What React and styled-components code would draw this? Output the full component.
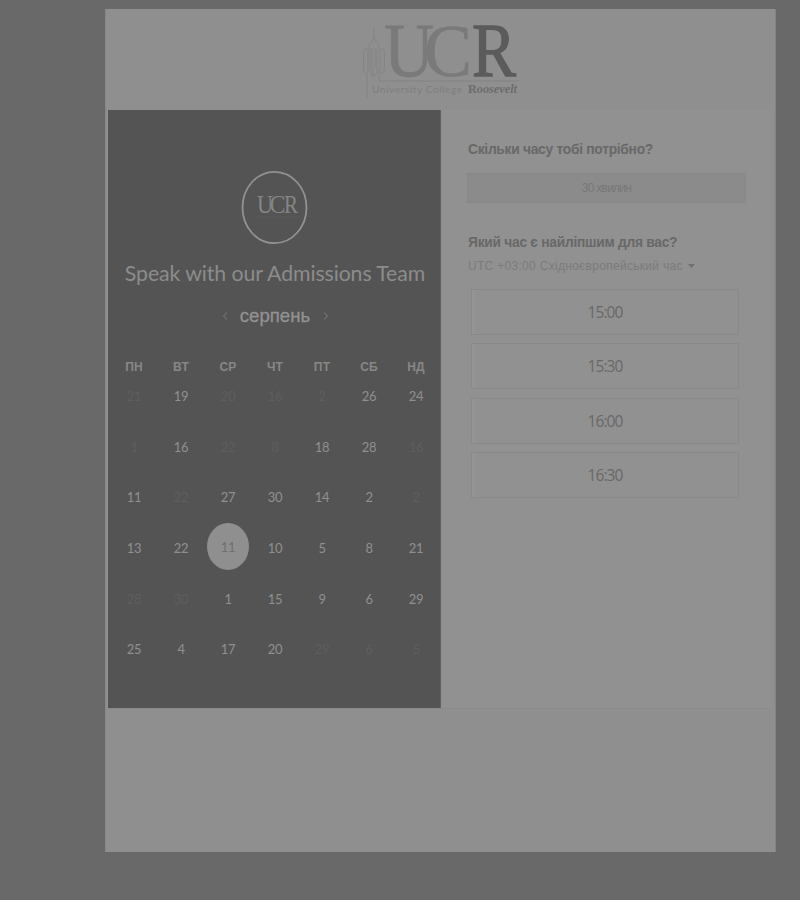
import React from "react";
import styled, { createGlobalStyle } from "styled-components";

const Global = createGlobalStyle`
  * { box-sizing: border-box; }
  html, body { margin: 0; padding: 0; background: #696969; }
  body { font-family: "Liberation Sans", Arial, sans-serif; overflow: hidden; }
`;

const Page = styled.div`
  width: 800px;
  height: 900px;
  padding: 9px 24px 0 105px;
  background: #696969;
`;

const Sheet = styled.main`
  height: 843px;
  background: #8f8f8f;
  border-right: 1px solid #838383;
  border-left: 1px solid #888888;
`;

const Header = styled.header`
  height: 101px;
  padding: 11px 0 0 254px;
`;

const Booking = styled.div`
  display: flex;
  height: 599px;
  width: 663px;
  margin-left: 2px;
  border-bottom: 1px solid #8a8a8a;
`;

const Calendar = styled.section`
  width: 333px;
  height: 598px;
  flex: none;
  background: #545454;
  border-right: 1px solid #606060;
  display: flex;
  flex-direction: column;
  align-items: center;
  padding: 60px 0 0 2px;
`;

const Title = styled.h1`
  margin: 11px 0 0;
  height: 34px;
  font: 400 21.3px/34px Lato, "Open Sans", sans-serif;
  letter-spacing: -0.1px;
  color: #8c8c8c;
  white-space: nowrap;
`;

const MonthBar = styled.div`
  display: flex;
  align-items: center;
  justify-content: center;
  gap: 12px;
  height: 24px;
  margin-top: 14px;
`;

const Month = styled.span`
  width: 71px;
  text-align: center;
  font-size: 18.6px;
  line-height: 24px;
  color: #929292;
  -webkit-text-stroke: 0.3px #929292;
`;

const Arrow = styled.svg`
  width: 6px;
  height: 10px;
  fill: none;
  stroke: #6c6c6c;
  stroke-width: 1.2;
`;

const WeekGrid = styled.div`
  display: grid;
  grid-template-columns: repeat(7, 47px);
  width: 329px;
  margin-top: 30px;
`;

const Weekday = styled.span`
  height: 18px;
  text-align: center;
  font: 700 12px/18px "Liberation Sans", sans-serif;
  letter-spacing: 0.2px;
  color: #878787;
`;

const Days = styled.div`
  display: grid;
  grid-template-columns: repeat(7, 47px);
  grid-auto-rows: 50.6px;
  margin-top: -5px;
  width: 329px;
`;

const Day = styled.span`
  display: flex;
  align-items: center;
  justify-content: center;
  font: 400 13px/16px Lato, sans-serif;
  letter-spacing: -0.3px;
  color: ${(p) => (p.$faint ? "#5e5e5e" : "#909090")};
`;

const Selected = styled.span`
  display: flex;
  align-items: center;
  justify-content: center;
  width: 42px;
  height: 47px;
  margin-bottom: 3px;
  flex: none;
  border-radius: 50%;
  background: #8f8f8f;
  color: #707070;
`;

const Options = styled.section`
  flex: 1;
  background: #919191;
  padding: 29px 0 0 26px;
`;

const Question = styled.h2`
  margin: 0 0 0 1px;
  height: 20px;
  width: max-content;
  font: 700 15px/20px "Liberation Sans", sans-serif;
  letter-spacing: -0.3px;
  transform: scaleX(0.92);
  transform-origin: left;
  color: #686868;
  white-space: nowrap;
`;

const Duration = styled.div`
  width: 279px;
  height: 30px;
  margin: 14px 0 29px;
  display: flex;
  align-items: center;
  justify-content: center;
  border: 1px solid #888888;
  background: #8b8b8b;
  font-size: 12px;
  letter-spacing: -0.75px;
  color: #777777;
`;

const Zone = styled.div`
  display: flex;
  align-items: center;
  gap: 5px;
  height: 16px;
  margin-top: 6px;
  padding-left: 1px;
  font-size: 12px;
  letter-spacing: 0.3px;
  color: #7b7b7b;
  white-space: nowrap;
`;

const Caret = styled.svg`
  width: 7px;
  height: 4px;
  fill: #707070;
`;

const Slots = styled.div`
  display: grid;
  gap: 8.4px;
  width: 268px;
  margin: 15px 0 0 4px;
`;

const Slot = styled.div`
  height: 46px;
  display: flex;
  align-items: center;
  justify-content: center;
  border: 1px solid #898989;
  box-shadow: inset 4px 0 3px -1px #959595;
  font: 400 15.5px/20px "Open Sans", sans-serif;
  letter-spacing: -0.9px;
  color: #686868;
`;

const LogoMark = styled.svg`
  display: block;
  width: 162px;
  height: 80px;
  overflow: visible;
`;

const AvatarMark = styled.svg`
  display: block;
  width: 68px;
  height: 75px;
`;

const weekdays = ["ПН", "ВТ", "СР", "ЧТ", "ПТ", "СБ", "НД"];
const faint = (n) => ({ n, faint: true });
const days = [
  faint(21), 19, faint(20), faint(16), faint(2), 26, 24,
  faint(1), 16, faint(22), faint(8), 18, 28, faint(16),
  11, faint(22), 27, 30, 14, 2, faint(2),
  13, 22, { n: 11, selected: true }, 10, 5, 8, 21,
  faint(28), faint(30), 1, 15, 9, 6, 29,
  25, 4, 17, 20, faint(29), faint(6), faint(5),
].map((d) => (typeof d === "number" ? { n: d } : d));

function Logo() {
  return (
    <LogoMark viewBox="0 0 162 80">
      <g fill="none" stroke="#838383" strokeWidth="1">
        <path d="M14 8v9q-1 4-5 8v5M14 17q1 4 5 8v5" />
        <path d="M4 30q-1 11 0 22l2 2 2-2V30l-2-2zM20 30v22l2 2 2-2q1-11 0-22l-2-2zM10 30v22l3 5v-9M17 30v22l-3 5M10 30l2-2v22M17 30l-2-2v20" />
        <path d="M7 54v24M19 50v11h140" />
      </g>
      <g fontFamily="'Liberation Serif', serif">
        <text x="24" y="55.5" fontSize="77" textLength="50" lengthAdjust="spacingAndGlyphs" fill="#7a7a7a" stroke="#7a7a7a" strokeWidth="0.8">U</text>
        <text x="64" y="55.5" fontSize="75" textLength="48" lengthAdjust="spacingAndGlyphs" fill="#7a7a7a" stroke="#7a7a7a" strokeWidth="0.6">C</text>
        <text x="112" y="55.5" fontSize="77" textLength="44" lengthAdjust="spacingAndGlyphs" fill="#5b5b5b" stroke="#5b5b5b" strokeWidth="1.3">R</text>
      </g>
      <text x="12" y="72.5" fontFamily="Lato, sans-serif" fontSize="10" textLength="90" fill="#7e7e7e">University College</text>
      <text x="108" y="73" fontFamily="'Liberation Serif', serif" fontSize="13" fontWeight="700" fontStyle="italic" textLength="49" lengthAdjust="spacingAndGlyphs" fill="#6c6c6c">
        <tspan fontStyle="normal">R</tspan>oosevelt
      </text>
    </LogoMark>
  );
}

function Avatar() {
  return (
    <AvatarMark viewBox="0 0 68 75">
      <ellipse cx="33.5" cy="37.5" rx="32" ry="35.7" fill="none" stroke="#929292" strokeWidth="1.8" />
      <g fontFamily="'Liberation Serif', serif" fontSize="25" fill="#858585">
        <text x="16" y="43" textLength="16" lengthAdjust="spacingAndGlyphs">U</text>
        <text x="28.5" y="43" textLength="16" lengthAdjust="spacingAndGlyphs">C</text>
        <text x="43" y="43" textLength="14" lengthAdjust="spacingAndGlyphs">R</text>
      </g>
      <path d="M14 47h42" stroke="#5d5d5d" strokeDasharray="3 1" />
    </AvatarMark>
  );
}

export default function App() {
  return (
    <Page>
      <Global />
      <Sheet>
        <Header><Logo /></Header>
        <Booking>
          <Calendar>
            <Avatar />
            <Title>Speak with our Admissions Team</Title>
            <MonthBar>
              <Arrow viewBox="0 0 6 10"><path d="M5 1.5 1.5 5 5 8.5" /></Arrow>
              <Month>серпень</Month>
              <Arrow viewBox="0 0 6 10"><path d="M1 1.5 4.5 5 1 8.5" /></Arrow>
            </MonthBar>
            <WeekGrid>
              {weekdays.map((d) => <Weekday key={d}>{d}</Weekday>)}
            </WeekGrid>
            <Days>
              {days.map((d, i) => (
                <Day key={i} $faint={d.faint}>
                  {d.selected ? <Selected>{d.n}</Selected> : d.n}
                </Day>
              ))}
            </Days>
          </Calendar>
          <Options>
            <Question>Скільки часу тобі потрібно?</Question>
            <Duration>30 хвилин</Duration>
            <Question>Який час є найліпшим для вас?</Question>
            <Zone>
              UTC +03:00 Східноєвропейський час
              <Caret viewBox="0 0 7 4"><path d="M0 0h7L3.5 4z" /></Caret>
            </Zone>
            <Slots>
              {["15:00", "15:30", "16:00", "16:30"].map((t) => <Slot key={t}>{t}</Slot>)}
            </Slots>
          </Options>
        </Booking>
      </Sheet>
    </Page>
  );
}
